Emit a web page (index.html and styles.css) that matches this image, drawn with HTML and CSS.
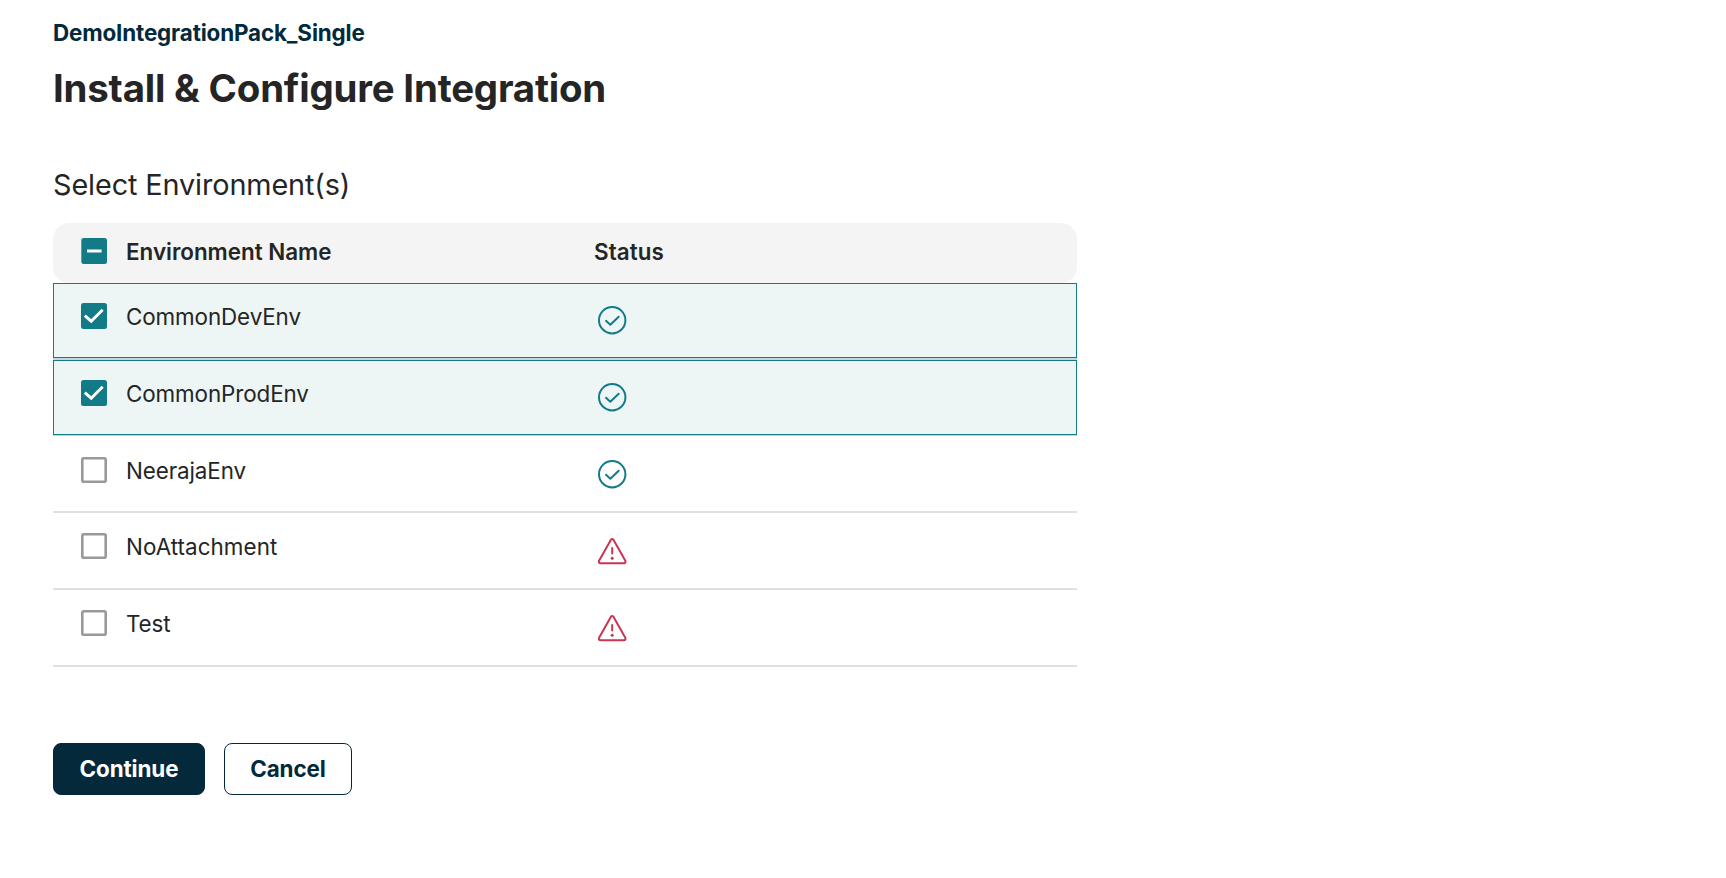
FILE: index.html
```
<!DOCTYPE html>
<html lang="en">
<head>
<meta charset="utf-8">
<title>Install &amp; Configure Integration</title>
<link rel="stylesheet" href="styles.css">
</head>
<body>
<svg class="sprite" aria-hidden="true">
  <symbol id="box-checked" viewBox="0 0 26 26"><rect width="26" height="26" rx="2.5" fill="#127b87"/><path d="M3.8 12.6 10.2 18.2 21.7 6.7" fill="none" stroke="#fff" stroke-width="2.9"/></symbol>
  <symbol id="box-mixed" viewBox="0 0 26 26"><rect x=".3" width="25.7" height="26" rx="2.5" fill="#127b87"/><path d="M6 13H20.6" stroke="#fff" stroke-width="3"/></symbol>
  <symbol id="box-empty" viewBox="0 0 26 26"><rect x="1.3" y="1.3" width="23.4" height="23.4" rx="1.5" fill="#fff" stroke="#999" stroke-width="2.6"/></symbol>
  <symbol id="ok" viewBox="0 0 29 29"><g fill="none" stroke="#127b87" stroke-width="2" stroke-linecap="round" stroke-linejoin="round"><circle cx="14.2" cy="14.2" r="13.2"/><path d="M8 14.8 12.3 18.7 20.7 10.8"/></g></symbol>
  <symbol id="warn" viewBox="0 0 29 29"><g fill="none" stroke="#cb3553" stroke-width="2" stroke-linecap="round" stroke-linejoin="round"><path d="M12.8 2.9Q14.2 1.1 15.6 2.9L27.2 23.4Q28.2 26.2 25.8 26.2H2.6Q.2 26.2 1.2 23.4Z"/><path d="M14.2 11V16.6"/></g><circle cx="14.2" cy="21.2" r="1.5" fill="#cb3553"/></symbol>
</svg>
<main class="page">
  <div class="pack-name">DemoIntegrationPack_Single</div>
  <h1 class="title">Install &amp; Configure Integration</h1>
  <h2 class="section-title">Select Environment(s)</h2>
  <div class="table">
    <div class="header">
      <svg class="checkbox"><use href="#box-mixed"/></svg>
      <span class="name">Environment Name</span><span class="status-label">Status</span>
    </div>
    <div class="row selected">
      <svg class="checkbox"><use href="#box-checked"/></svg>
      <span class="name">CommonDevEnv</span><svg class="status"><use href="#ok"/></svg>
    </div>
    <div class="row selected last-selected">
      <svg class="checkbox"><use href="#box-checked"/></svg>
      <span class="name">CommonProdEnv</span><svg class="status"><use href="#ok"/></svg>
    </div>
    <div class="row offset">
      <svg class="checkbox"><use href="#box-empty"/></svg>
      <span class="name">NeerajaEnv</span><svg class="status"><use href="#ok"/></svg>
    </div>
    <div class="row warning">
      <svg class="checkbox"><use href="#box-empty"/></svg>
      <span class="name loose">NoAttachment</span><svg class="status"><use href="#warn"/></svg>
    </div>
    <div class="row warning">
      <svg class="checkbox"><use href="#box-empty"/></svg>
      <span class="name">Test</span><svg class="status"><use href="#warn"/></svg>
    </div>
  </div>
  <div class="actions">
    <button class="button primary">Continue</button>
    <button class="button secondary">Cancel</button>
  </div>
</main>
</body>
</html>
```
FILE: styles.css
```
* { box-sizing: border-box; }
body {
  margin: 0;
  background: #fff;
  color: #252525;
  font-family: Inter, "Liberation Sans", sans-serif;
}
.sprite { display: none; }
.page { width: 1077px; padding: 18px 0 0 53px; }
.pack-name {
  height: 30px;
  color: #03293b;
  font-size: 22.4px;
  font-weight: 650;
  letter-spacing: -0.14px;
  line-height: 30px;
}
.title {
  height: 50px;
  margin: 15px 0 0;
  font-size: 38.4px;
  font-weight: 650;
  letter-spacing: -0.19px;
  line-height: 50px;
}
.section-title {
  height: 40px;
  margin: 52px 0 0;
  font-size: 28.8px;
  font-weight: 400;
  letter-spacing: -0.1px;
  line-height: 40px;
}
.table { margin-top: 18px; }
.header, .row {
  display: grid;
  grid-template-columns: 26px 468px 1fr;
  align-items: start;
  padding-left: 28px;
  font-size: 22.4px;
  line-height: 30px;
}
.header {
  height: 60px;
  padding-top: 15px;
  border-radius: 16px;
  background: #f4f4f4;
  font-weight: 600;
}
.checkbox { display: block; width: 26px; height: 26px; }
.name { padding-left: 19px; }
.header .name { margin-top: -1px; }
.status-label { margin: -1px 0 0 19px; letter-spacing: 0.1px; }
.row {
  height: 77px;
  padding-top: 20px;
  border-bottom: 2px solid #e0e0e0;
}
.row .name { margin-top: -1px; letter-spacing: -0.1px; }
.row .loose { letter-spacing: 0.06px; }
.status { display: block; width: 29px; height: 29px; margin: 3px 0 0 23px; }
.row.selected {
  padding: 19px 0 0 27px;
  border: 1px solid #127b87;
  background: #edf6f5;
  height: 75px;
  margin-bottom: 2px;
  box-shadow: 0 2px #c9d5d7;
}
.row.last-selected { margin-bottom: 1px; box-shadow: 0 1px #c9d5d7; }
.row.offset { padding-top: 21px; }
.row.offset .status { margin-top: 2.5px; }
.row.warning .status { margin-top: 3.5px; }
.actions { display: flex; gap: 19px; margin-top: 76px; }
.button {
  height: 52px;
  padding: 0 0 2px;
  border: 1px solid #03293b;
  border-radius: 8px;
  color: #03293b;
  background: #fff;
  font-family: inherit;
  font-size: 22.4px;
  font-weight: 650;
  letter-spacing: -0.1px;
}
.primary { width: 152px; background: #03293b; color: #fff; }
.secondary { width: 128px; }
```
